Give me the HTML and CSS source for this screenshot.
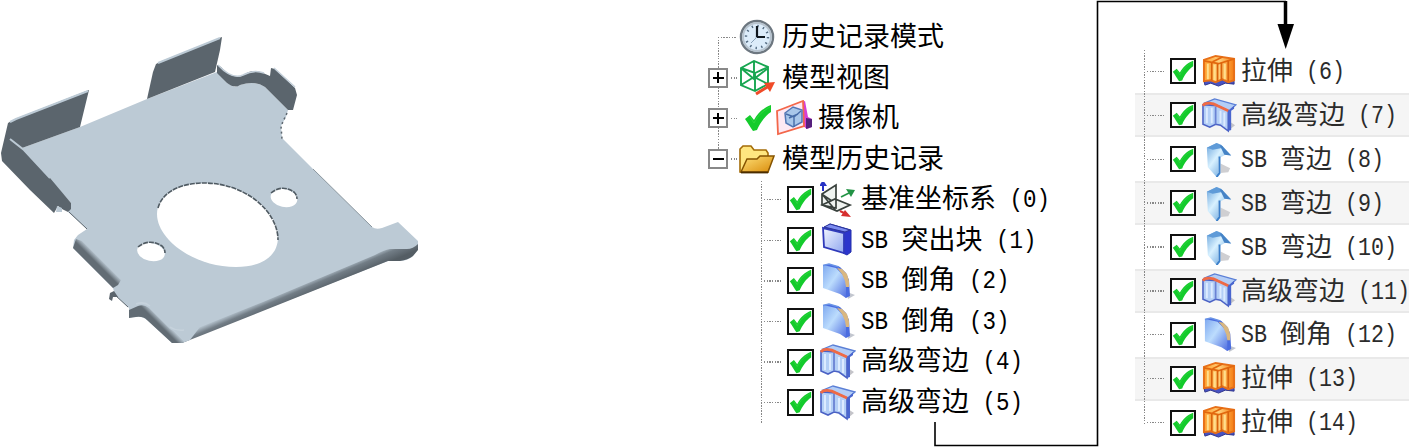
FILE: index.html
```
<!DOCTYPE html>
<html lang="zh-CN">
<head>
  <meta charset="UTF-8" />
  <meta name="viewport" content="width=device-width, initial-scale=1.0"/>
  <title>模型历史记录</title>
  <link rel="stylesheet" href="styles.css">
</head>
<body>

<!-- icon definitions -->
<svg class="defs" width="0" height="0">
  <defs>
    <linearGradient id="gBlue" x1="0" y1="0" x2="1" y2="1">
      <stop offset="0" stop-color="#7fa9f0"/><stop offset=".45" stop-color="#bcdcfd"/><stop offset="1" stop-color="#4f6ee0"/>
    </linearGradient>
    <linearGradient id="gFace" x1="0" y1="0" x2="1" y2="1">
      <stop offset="0" stop-color="#f2f6ff"/><stop offset="1" stop-color="#8fa6ef"/>
    </linearGradient>
    <linearGradient id="gBend" x1="0" y1="0" x2="1" y2="1">
      <stop offset="0" stop-color="#6aa4dc"/><stop offset=".4" stop-color="#d8f1ff"/><stop offset="1" stop-color="#3f86cf"/>
    </linearGradient>
    <linearGradient id="gGold" x1="0" y1="0" x2="1" y2="1">
      <stop offset="0" stop-color="#ffe27a"/><stop offset="1" stop-color="#d98b0a"/>
    </linearGradient>
    <linearGradient id="gOrange" x1="0" y1="0" x2="1" y2="0">
      <stop offset="0" stop-color="#ff9d2a"/><stop offset=".5" stop-color="#ffd07a"/><stop offset="1" stop-color="#f57c10"/>
    </linearGradient>
  </defs>

  <symbol id="tick" viewBox="0 0 28 28">
    <path d="M1 15 L6 11 L10 16 C14 9 19 4 27 1 V8 C21 12 16 19 13 26 L9 27 C6 23 4 19 1 15Z" fill="#14cb2c"/>
    <path d="M6 13 L10 19 C14 11 19 7 26 3" fill="none" stroke="#2ed83e" stroke-width="1"/>
  </symbol>

  <symbol id="clock" viewBox="0 0 36 36">
    <circle cx="18" cy="18" r="16" fill="#dcecfa" stroke="#6d7780" stroke-width="2.500"/>
    <circle cx="18" cy="18" r="14" fill="none" stroke="#b8c4cf" stroke-width="2"/>
    <circle cx="18" cy="18" r="11" fill="none" stroke="#536a80" stroke-width="2.4" stroke-dasharray="1.4 4.36"/>
    <path d="M18 7 V18 H26" fill="none" stroke="#101820" stroke-width="2.2"/>
    <path d="M18 18 L12 24" stroke="#8aa3ba" stroke-width="1"/>
  </symbol>

  <symbol id="views" viewBox="0 0 36 36">
    <path d="M2 8 L15 1 L29 7 V24 L16 31 L2 25Z M2 8 L16 13 L29 7 M16 13 V31 M15 1 V17 L2 25 M15 17 L29 24 M3 9 L15 19 L28 9" fill="none" stroke="#17a650" stroke-width="1.9"/>
    <path d="M17 34 L30 26" stroke="#f04b28" stroke-width="3"/>
    <path d="M25 23 L36 22 L31 32Z" fill="#f04b28"/>
  </symbol>

  <symbol id="camera" viewBox="0 0 36 36">
    <path d="M20 4 L29 1 L32 17 L36 19 V27 L31 29 L27 26Z" fill="#d63fd8"/>
    <path d="M30 18 L36 19 V27 L30 29Z" fill="#55207d"/>
    <path d="M1 11 L27 1 L28 26 L2 34Z" fill="#fde9f4" stroke="#f3674a" stroke-width="1.8"/>
    <path d="M9 13 L17 7 L26 10 V22 L17 27 L10 23Z" fill="#a9c7ea" stroke="#5477b5" stroke-width="1.5"/>
    <path d="M10 14 L18 17 L25 11 M18 17 V27 M13 18 L22 14" fill="none" stroke="#476ca8" stroke-width="1.4"/>
  </symbol>

  <symbol id="folder" viewBox="0 0 36 36">
    <path d="M1 31 V8 L4 5 H12 L15 9 H27 L29 12 V31Z" fill="#ffe680" stroke="#a46c08" stroke-width="1.6"/>
    <path d="M2 31 L8 18 L18 18 L21 15 H35 L29 31Z" fill="url(#gGold)" stroke="#855300" stroke-width="1.5"/>
    <path d="M2 31.500 H29" stroke="#4a2d00" stroke-width="1.8"/>
  </symbol>

  <symbol id="csys" viewBox="0 0 36 36">
    <path d="M2 12 L16 3 V26 L2 23Z M2 23 L15 17 L30 23 L17 29Z M2 12 L16 29 M3 13 L12 19" fill="#dfe7e2" fill-opacity=".5" stroke="#39413d" stroke-width="1.7"/>
    <path d="M3 9 V2" stroke="#2732c4" stroke-width="2"/><path d="M-1 4 L3 -2 L7 4Z" fill="#2732c4"/>
    <path d="M21 15 L29 11" stroke="#229345" stroke-width="1.8"/><path d="M26 7 L35 8 L31 15Z" fill="#229345"/>
    <path d="M20 29 L26 32" stroke="#d62f2f" stroke-width="2"/><path d="M25 28 L31 35 L21 34Z" fill="#d62f2f"/>
  </symbol>

  <symbol id="tab" viewBox="0 0 36 36">
    <path d="M4 6 L10 2 L31 8 V30 L27 33 L23 31Z" fill="#2b35cc" stroke="#2530ac"/>
    <path d="M3 6 L24 11 V31 L4 25Z" fill="url(#gFace)" stroke="#2f3aba" stroke-width="1.8"/>
    <path d="M4 5 L10 2 L30 8 L25 10Z" fill="#7c8cf0" stroke="#2b3498"/>
  </symbol>

  <symbol id="chamfer" viewBox="0 0 36 36">
    <path d="M27 29 L35 32 L28 36Z" fill="#c2c6cf"/>
    <path d="M3 2 L9 1 L20 4 L26 10 L29 17 L30 33 L26 35Z" fill="#4a6ce0"/>
    <path d="M3 2 L16 5 L23 12 L26 19 V35 L20 31 L3 25Z" fill="url(#gBlue)"/>
    <path d="M17 5 L22 6 L27 11 L29 18 V24 L26 24 L25 18 L22 11Z" fill="#d9b780"/>
    <path d="M3 2.500 L9 1 L19 4" fill="none" stroke="#6a94e6" stroke-width="1.5"/>
  </symbol>

  <symbol id="flange" viewBox="0 0 36 36">
    <path d="M28 24 L34 28 L28 33Z" fill="#c4c4c9"/>
    <path d="M3 5 L13 1 L35 7 L28 13Z" fill="#b3cdf6" stroke="#5b7fd6" stroke-width="1.3"/>
    <path d="M1 7 V27 L8 30 L14 27 L19 28 L27 34 V13 L16 8Z" fill="#b4cff6" stroke="#4b62c5" stroke-width="1.6"/>
    <path d="M27 13 L33 8 V11 L30 13 V33 L27 34Z" fill="#4a66cf"/>
    <path d="M5 10 V26 M10 10 V26 M19 13 V26 M23 15 V29" stroke="#dcebff" stroke-width="2"/>
    <path d="M14 9 V27" stroke="#6a82d4" stroke-width="1.8"/>
    <path d="M1 8 C3 4 11 5 16 8 L27 13" fill="none" stroke="#ef6a45" stroke-width="2.8"/>
  </symbol>

  <symbol id="bend" viewBox="0 0 36 36">
    <path d="M19 22 L29 27 L27 31 L19 32Z" fill="#cfcfd2"/>
    <path d="M5 6 L15 1 L20 3 L30 14 L24 13 L17 17 V34 L15 36 L6 26Z" fill="url(#gBend)"/>
    <path d="M5 6 L15 1 L20 3 L22 6 L11 8Z" fill="#5f9bd8"/>
    <path d="M18 3 L21 4 L30 14 L23 13Z" fill="#4583c6"/>
    <path d="M18 15 V32 L15 36" fill="none" stroke="#3c80ca" stroke-width="2"/>
  </symbol>

  <symbol id="extrude" viewBox="0 0 36 36">
    <path d="M2 27 L8 24 L17 28 L27 25 L33 28 V31 L24 30 L17 33 L9 30 L3 32Z" fill="#4753c4" stroke="#30358b"/>
    <path d="M2 6 L14 2 L33 5 V27 L27 29 L21 26 L14 29 L9 27 L2 28Z" fill="url(#gOrange)" stroke="#e87018" stroke-width="2"/>
    <path d="M2 7 L17 10 L33 5 M11 8 L21 3" fill="none" stroke="#e2680e" stroke-width="1.8"/>
    <path d="M10 9 V27 M16 10 V28 M20 9 V27 M27 7 V28" stroke="#d9620c" stroke-width="1.8"/>
    <path d="M6 10 V26 M13 11 V27 M23.500 10 V26" stroke="#ffdf8d" stroke-width="2"/>
  </symbol>
</svg>

<!-- sheet metal part -->
<svg class="part" viewBox="0 0 430 447">
  <defs>
    <linearGradient id="edge" gradientUnits="userSpaceOnUse" x1="290" y1="288" x2="296" y2="302">
      <stop offset="0" stop-color="#bccad5"/><stop offset=".4" stop-color="#727d86"/><stop offset="1" stop-color="#545d64"/>
    </linearGradient>
    <linearGradient id="lip" gradientUnits="userSpaceOnUse" x1="101" y1="259" x2="94" y2="266">
      <stop offset="0" stop-color="#bccad5"/><stop offset=".6" stop-color="#626c74"/>
    </linearGradient>
    <linearGradient id="corner" gradientUnits="userSpaceOnUse" x1="158" y1="315" x2="152" y2="321">
      <stop offset="0" stop-color="#bccad5"/><stop offset=".7" stop-color="#626c74"/>
    </linearGradient>
  </defs>
  <path class="face" d="M22 148 L80 127 L147 99 L217 72 L227 83 L235 87 L240 85 Q255 80 265 87 L288 110 L286 117 L281 126 L282 138 L313 169 L372 227 Q376 230 382 228 L398 222 L418 241 L418 249 L412 257 Q406 261 400 261 L388 261 L200 335 L182 343 H172 L147 320 Q142 315 133 317 L129 318 V308 L115 295 L113 288 L73 248 L74 240 L78 235 L87 229 L68 212 L71 203Z"/>
  <path fill="url(#edge)" d="M418 244 Q413 249 407 249 L390 249 Q384 250 375 255 L263 302 L200 327 L184 332 L172 343 H182 L200 336 L388 261 L400 261 Q408 260 413 256 L418 250Z"/>
  <path fill="url(#corner)" d="M200 327 L184 332 Q177 334 170 329 L149 308 Q144 304 138 306 L129 310 V318 L136 317 Q143 316 147 320 L172 343 H182 L190 340Z"/>
  <path fill="none" stroke="#c6d2dc" stroke-width="1.5" d="M136 304 Q144 301 150 306 M170 327 Q176 331 184 330"/>
  <path fill="url(#lip)" d="M76 239 L82 241 L121 280 L118 285 L113 288 L73 248Z"/>
  <path class="dark" d="M110 293 L114 291 L118 297 L113 297 L112 301 L109 299Z"/>
  <path fill="none" stroke="#5b656d" d="M69 212 L87 229 M115 295 L128 307"/>
  <path class="dark" d="M8 123 L15 119 L89 90 L80 127 L22 148 L50 178 L71 203 V209 L68 212 L62 209 L58 206 L54 213 L30 190 L2 161 L1 153Z"/>
  <path class="dark" d="M147 99 L153 72 L156 64 L162 61 L222 37 L220 50 L215 72Z"/>
  <path class="face" d="M57 206 L62 208 V212 L56 212Z"/>
  <path fill="none" stroke="#bccad5" stroke-width="2" d="M10 122 L16 119 L88 91 M158 63 L220 38 M10 139 L24 150 L50 178"/>
  <path class="dark" d="M217 65 L221 67 Q231 79 242 76 Q252 68 263 73 L270 76 L271 68 L275 69 L295 88 L297 95 L293 110 L288 110 L265 87 Q255 80 240 85 Q235 89 227 83 L217 73Z"/>
  <path fill="none" stroke="#c3cfd9" stroke-width="1.500" d="M274 68 L295 87 M218 65 Q232 80 243 75 Q254 69 264 73"/>
  <path fill="none" stroke="#5b656d" stroke-width="1.500" stroke-dasharray="2 3" d="M287 113 L281 126 L282 139"/>
  <path fill="none" stroke="#8b979f" d="M313 169 L372 227"/>
  <path fill="#fff" d="M157 214 C157 195 178 183 204 183 C245 183 278 211 278 237 C278 256 262 267 236 267 C193 267 157 239 157 214Z"/>
  <path class="rim" d="M158 208 C162 192 181 183 204 183 C245 183 278 211 278 240"/>
  <ellipse cx="151" cy="252" rx="14" ry="9" transform="rotate(12 151 252)" fill="#fff"/>
  <path class="rim" d="M138 247 Q149 238 162 246 Q165 249 165 253"/>
  <ellipse cx="284" cy="198" rx="13.500" ry="9" transform="rotate(12 284 198)" fill="#fff"/>
  <path class="rim" d="M271 193 Q282 184 294 192 Q297 195 297 199"/>
</svg>

<main class="tree tree-left">
  <div class="row top first">
    <i class="box none"></i><i class="stub"></i>
    <svg class="icon"><use href="#clock"/></svg>
    <span class="label">历史记录模式</span>
  </div>
  <div class="row top">
    <i class="box plus"></i><i class="stub"></i>
    <svg class="icon"><use href="#views"/></svg>
    <span class="label">模型视图</span>
  </div>
  <div class="row top">
    <i class="box plus"></i><i class="stub"></i>
    <svg class="icon tick"><use href="#tick"/></svg>
    <svg class="icon cam"><use href="#camera"/></svg>
    <span class="label">摄像机</span>
  </div>
  <div class="row top last">
    <i class="box"></i><i class="stub"></i>
    <svg class="icon"><use href="#folder"/></svg>
    <span class="label">模型历史记录</span>
  </div>
  <div class="branch">
    <div class="row"><i class="stub"></i><svg class="check"><use href="#tick"/></svg><svg class="icon"><use href="#csys"/></svg><span class="label">基准坐标系<b> (0)</b></span></div>
    <div class="row"><i class="stub"></i><svg class="check"><use href="#tick"/></svg><svg class="icon"><use href="#tab"/></svg><span class="label"><b>SB </b>突出块<b> (1)</b></span></div>
    <div class="row"><i class="stub"></i><svg class="check"><use href="#tick"/></svg><svg class="icon"><use href="#chamfer"/></svg><span class="label"><b>SB </b>倒角<b> (2)</b></span></div>
    <div class="row"><i class="stub"></i><svg class="check"><use href="#tick"/></svg><svg class="icon"><use href="#chamfer"/></svg><span class="label"><b>SB </b>倒角<b> (3)</b></span></div>
    <div class="row"><i class="stub"></i><svg class="check"><use href="#tick"/></svg><svg class="icon"><use href="#flange"/></svg><span class="label">高级弯边<b> (4)</b></span></div>
    <div class="row"><i class="stub"></i><svg class="check"><use href="#tick"/></svg><svg class="icon"><use href="#flange"/></svg><span class="label">高级弯边<b> (5)</b></span></div>
  </div>
</main>

<aside class="tree tree-right">
  <div class="branch">
    <div class="row"><i class="stub"></i><svg class="check"><use href="#tick"/></svg><svg class="icon"><use href="#extrude"/></svg><span class="label">拉伸<b> (6)</b></span></div>
    <div class="row"><i class="stub"></i><svg class="check"><use href="#tick"/></svg><svg class="icon"><use href="#flange"/></svg><span class="label">高级弯边<b> (7)</b></span></div>
    <div class="row"><i class="stub"></i><svg class="check"><use href="#tick"/></svg><svg class="icon"><use href="#bend"/></svg><span class="label"><b>SB </b>弯边<b> (8)</b></span></div>
    <div class="row"><i class="stub"></i><svg class="check"><use href="#tick"/></svg><svg class="icon"><use href="#bend"/></svg><span class="label"><b>SB </b>弯边<b> (9)</b></span></div>
    <div class="row"><i class="stub"></i><svg class="check"><use href="#tick"/></svg><svg class="icon"><use href="#bend"/></svg><span class="label"><b>SB </b>弯边<b> (10)</b></span></div>
    <div class="row"><i class="stub"></i><svg class="check"><use href="#tick"/></svg><svg class="icon"><use href="#flange"/></svg><span class="label">高级弯边<b> (11)</b></span></div>
    <div class="row"><i class="stub"></i><svg class="check"><use href="#tick"/></svg><svg class="icon"><use href="#chamfer"/></svg><span class="label"><b>SB </b>倒角<b> (12)</b></span></div>
    <div class="row"><i class="stub"></i><svg class="check"><use href="#tick"/></svg><svg class="icon"><use href="#extrude"/></svg><span class="label">拉伸<b> (13)</b></span></div>
    <div class="row"><i class="stub"></i><svg class="check"><use href="#tick"/></svg><svg class="icon"><use href="#extrude"/></svg><span class="label">拉伸<b> (14)</b></span></div>
  </div>
</aside>

<!-- arrow from the end of the left list to the start of the right one -->
<svg class="connector" viewBox="0 0 1409 447">
  <path d="M935 422 V445.500 H1097.500 V1.500 H1286" fill="none" stroke="#000" stroke-width="1.600"/>
  <path d="M1285.500 1 V26" stroke="#000" stroke-width="3.500"/>
  <path d="M1277.500 24 H1294 L1285.700 49Z"/>
</svg>

</body>
</html>
```
FILE: styles.css
```
:root {
  --dots: #888;
  --face: #bccad5;
  --dark: #5b656d;
}

* { margin: 0; padding: 0; box-sizing: border-box; }

body {
  position: relative;
  display: flex;
  width: 1409px;
  height: 447px;
  overflow: hidden;
  background: #fff;
  color: #000;
  font-family: "Noto Sans CJK SC", sans-serif;
}

svg { display: block; flex: none; }
.defs, .connector { position: absolute; top: 0; left: 0; }
.connector { width: 1409px; height: 447px; pointer-events: none; }

/* part */
.part { width: 430px; height: 447px; }
.face { fill: var(--face); }
.dark { fill: var(--dark); }
.rim { fill: none; stroke: #4f5a62; stroke-width: 1.6; stroke-dasharray: 5 1; }

/* trees */
.tree { flex: none; }

.row {
  position: relative;
  display: flex;
  align-items: center;
  height: var(--row);
}

.label {
  flex: none;
  padding-bottom: 3px;
  font-size: var(--size);
  line-height: 1;
  white-space: pre;
}

.label b {
  display: inline-block;
  font-family: "Liberation Mono", monospace;
  font-size: calc(var(--size) / 1.2);
  font-weight: 400;
  line-height: 1;
  transform: translateY(-2px) scaleY(1.15);
}

.stub {
  flex: none;
  height: 1.4px;
  background: repeating-linear-gradient(90deg, var(--dots) 0 1.4px, transparent 1.4px 2.7px);
}

.icon { width: 36px; height: 36px; overflow: visible; }

.check {
  width: var(--check);
  height: var(--check);
  border: 2px solid #111;
  background: #fff;
}

.top::before,
.branch::before {
  content: "";
  position: absolute;
  width: 1.4px;
  background: repeating-linear-gradient(var(--dots) 0 1.4px, transparent 1.4px 2.7px);
}

.tree-left {
  --row: 40.6px;
  --size: 27px;
  --check: 27px;
  width: 389px;
  margin-left: 278px;
  padding-top: 17px;
}

.top::before { left: 10px; top: 0; bottom: 0; }
.first::before { top: 20px; }
.last::before { bottom: 20px; }

.top .stub { width: 6px; margin: 0 2px 0 3px; }
.first .stub { width: 19px; margin-left: -10px; }
.top .icon { margin-right: 7px; }
.top .tick { width: 28px; height: 28px; margin: 0 4px 0 5px; }
.top .cam { margin-right: 6px; }
.top .label { padding-bottom: 5px; }

.box {
  position: relative;
  width: 20px;
  height: 20px;
  border: 2px solid #888;
  background:
    linear-gradient(#000, #000) center / 11px 2px no-repeat,
    #fff;
}

.plus {
  background:
    linear-gradient(#000, #000) center / 11px 2px no-repeat,
    linear-gradient(#000, #000) center / 2px 11px no-repeat,
    #fff;
}

.none { visibility: hidden; }

.branch { position: relative; }
.branch .stub { width: 17px; margin-right: 6px; }
.branch .icon { margin: 0 5px 0 6px; }

.tree-left .branch { padding-left: 56px; }
.tree-left .branch::before { left: 53px; top: 2px; height: 243px; }

.tree-right {
  --row: 43.9px;
  --size: 26px;
  --check: 26px;
  width: 274px;
  margin-left: 38px;
  padding-top: 49.5px;
  color: #2b2b2b;
}

.tree-right .branch::before { z-index: 1; left: 9px; top: 0; height: 374px; }
.tree-right .row { padding-left: 12px; }
.tree-right .icon { width: 35px; height: 35px; margin-right: 4px; }
.tree-right .label { padding-bottom: 1px; }
.tree-right .row:nth-child(even) {
  background: #f5f5f5;
  border-top: 2px solid #e9e9e9;
  border-bottom: 2px solid #e9e9e9;
}
```
